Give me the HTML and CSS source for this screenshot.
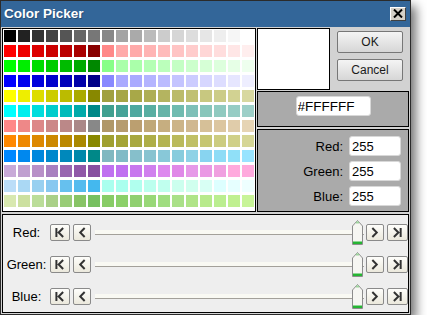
FILE: index.html
```html
<!DOCTYPE html>
<html lang="en">
<head>
    <meta charset="UTF-8">
    <title>Color Picker</title>
    <link rel="stylesheet" href="styles.css">
</head>
<body>

    <div class="window">
        <div class="titlebar">
            <span class="title">Color Picker</span>
            <button class="close-btn" title="Close">
                <svg width="10" height="9" viewBox="0 0 10 9"><path d="M1 0.5 L9 8.5 M9 0.5 L1 8.5" stroke="#000" stroke-width="2"/></svg>
            </button>
        </div>

        <div class="content">
            <div class="top">
                <div class="swatches" id="swatches"></div>

                <div class="side">
                    <div class="side-top">
                        <div class="preview" id="preview"></div>
                        <div class="actions">
                            <button class="dlg-btn">OK</button>
                            <button class="dlg-btn">Cancel</button>
                        </div>
                    </div>

                    <div class="hex-panel">
                        <input type="text" class="field hex-field" id="hex" value="#FFFFFF">
                    </div>

                    <div class="rgb-panel">
                        <div class="rgb-row">
                            <label for="red">Red:</label>
                            <input type="text" class="field" id="red" value="255">
                        </div>
                        <div class="rgb-row">
                            <label for="green">Green:</label>
                            <input type="text" class="field" id="green" value="255">
                        </div>
                        <div class="rgb-row">
                            <label for="blue">Blue:</label>
                            <input type="text" class="field" id="blue" value="255">
                        </div>
                    </div>
                </div>
            </div>

            <div class="sliders">
                <div class="slider-row">
                    <span class="slider-label">Red:</span>
                    <button class="step-btn wide"><svg width="20" height="15" viewBox="0 0 20 15"><path d="M6 2.5 V12.5 M13.5 2.5 L8.5 7.5 L13.5 12.5" /></svg></button>
                    <button class="step-btn"><svg width="18" height="15" viewBox="0 0 18 15"><path d="M12 2.5 L7 7.5 L12 12.5" /></svg></button>
                    <div class="track"><span class="thumb"><svg width="13" height="25" viewBox="0 0 13 25"><path class="thumb-body" d="M1.5 24.5 V6 L6.5 0.5 L11.5 6 V24.5 Z"/><rect class="thumb-tip" x="5" y="1.5" width="3" height="2"/><rect class="thumb-foot" x="2" y="21.5" width="9" height="2.5"/></svg></span></div>
                    <button class="step-btn"><svg width="18" height="15" viewBox="0 0 18 15"><path d="M6 2.5 L11 7.5 L6 12.5" /></svg></button>
                    <button class="step-btn wide"><svg width="21" height="15" viewBox="0 0 21 15"><path d="M6.5 2.5 L11.5 7.5 L6.5 12.5 M14 2.5 V12.5" /></svg></button>
                </div>
                <div class="slider-row">
                    <span class="slider-label">Green:</span>
                    <button class="step-btn wide"><svg width="20" height="15" viewBox="0 0 20 15"><path d="M6 2.5 V12.5 M13.5 2.5 L8.5 7.5 L13.5 12.5" /></svg></button>
                    <button class="step-btn"><svg width="18" height="15" viewBox="0 0 18 15"><path d="M12 2.5 L7 7.5 L12 12.5" /></svg></button>
                    <div class="track"><span class="thumb"><svg width="13" height="25" viewBox="0 0 13 25"><path class="thumb-body" d="M1.5 24.5 V6 L6.5 0.5 L11.5 6 V24.5 Z"/><rect class="thumb-tip" x="5" y="1.5" width="3" height="2"/><rect class="thumb-foot" x="2" y="21.5" width="9" height="2.5"/></svg></span></div>
                    <button class="step-btn"><svg width="18" height="15" viewBox="0 0 18 15"><path d="M6 2.5 L11 7.5 L6 12.5" /></svg></button>
                    <button class="step-btn wide"><svg width="21" height="15" viewBox="0 0 21 15"><path d="M6.5 2.5 L11.5 7.5 L6.5 12.5 M14 2.5 V12.5" /></svg></button>
                </div>
                <div class="slider-row">
                    <span class="slider-label">Blue:</span>
                    <button class="step-btn wide"><svg width="20" height="15" viewBox="0 0 20 15"><path d="M6 2.5 V12.5 M13.5 2.5 L8.5 7.5 L13.5 12.5" /></svg></button>
                    <button class="step-btn"><svg width="18" height="15" viewBox="0 0 18 15"><path d="M12 2.5 L7 7.5 L12 12.5" /></svg></button>
                    <div class="track"><span class="thumb"><svg width="13" height="25" viewBox="0 0 13 25"><path class="thumb-body" d="M1.5 24.5 V6 L6.5 0.5 L11.5 6 V24.5 Z"/><rect class="thumb-tip" x="5" y="1.5" width="3" height="2"/><rect class="thumb-foot" x="2" y="21.5" width="9" height="2.5"/></svg></span></div>
                    <button class="step-btn"><svg width="18" height="15" viewBox="0 0 18 15"><path d="M6 2.5 L11 7.5 L6 12.5" /></svg></button>
                    <button class="step-btn wide"><svg width="21" height="15" viewBox="0 0 21 15"><path d="M6.5 2.5 L11.5 7.5 L6.5 12.5 M14 2.5 V12.5" /></svg></button>
                </div>
            </div>
        </div>
    </div>

    <script>
        // 12 rows x 18 columns
        const paleta = [
            "000000 222222 333333 444444 555555 666666 777777 888888 a4a4a4 aaaaaa bbbbbb cccccc d6d6d6 dddddd e6e6e6 eeeeee f6f6f6 ffffff",
            "ff0000 ee0000 dd0000 cc0000 bb0000 aa0000 880000 ff8888 ffaaaa ffaaaa ffb4b4 ffbbbb ffc4c4 ffcccc ffd6d6 ffdddd ffe6e6 ffeeee",
            "00ff00 00ee00 00dd00 00cc00 00bb00 00aa00 008800 88ff88 aaffaa aaffaa b4ffb4 bbffbb c4ffc4 ccffcc d6ffd6 ddffdd e6ffe6 eeffee",
            "0000ff 0000ee 0000dd 0000cc 0000bb 0000aa 000088 8888ff aaaaff aaaaff b4b4ff bbbbff c4c4ff ccccff d6d6ff ddddff e6e6ff eeeeff",
            "ffff00 eeee00 dddd00 cccc00 bbbb00 aaaa00 888800 a0a040 a6a645 a8a848 aeae55 b4b460 bbbb6a c0c072 c8c880 cccc88 d2d292 d8d8a0",
            "00ffff 00eeee 00dddd 00cccc 00bbbb 00aaaa 008888 40a090 46a398 4ea8a0 58aea2 66b4a8 70bbb0 7ec0b8 88c6bb 90cac0 96ccc4 9dcfc8",
            "ff8888 ee8888 dd8888 cc8888 bb8888 aa8888 888888 b09868 b69c6e bb9f70 c0a878 c6ae80 ccb488 d0b890 d6c098 dcc6a0 e0ccaa e6d4b4",
            "ff8800 ee8800 dd8800 cc8800 bb8800 aa8800 888800 a0a030 a4a436 a8a840 aeae48 b4b452 baba5c c0c066 c6c672 cccc80 d0d088 d6d696",
            "0088ff 0088ee 0088dd 0088cc 0088bb 0088aa 008888 80b8c0 80bbc6 86bfcb 88c3d0 88c8d8 88ccdd 8ed2e6 88d4f0 8edcf6 90e0f8 99e4ff",
            "c8aad8 c0a0d0 b890c8 a880c0 9966b0 9058a8 8850a0 c070f0 c070f0 c877ee d080ee dd88ee e088e8 e699e8 ea99e4 f0a0e0 ffaadd ffaadd",
            "bbddf8 aad8f4 99d0f0 88c8f0 66c0ee 55bbee 44b8ee aaffee aaffee b0ffee bbffee c0ffee ccffee d0ffee d8fff4 ddffff e6ffff eeffff",
            "d8e8b0 cce0a0 bbdd99 aad088 99cc77 88c466 77c060 88cc66 8cd06a 90d070 99d878 a0dd80 aae088 b0e488 b8ea8c bbee90 c0f090 c8f498"
        ];

        const swatches = document.getElementById('swatches');
        paleta.forEach(linha => {
            linha.split(' ').forEach(cor => {
                let cell = document.createElement('div');
                cell.className = 'swatch';
                cell.style.backgroundColor = '#' + cor;
                cell.title = '#' + cor.toUpperCase();
                swatches.appendChild(cell);
            });
        });
    </script>

</body>
</html>
```

FILE: styles.css
```css
body {
    margin: 0;
    padding: 0;
    background-color: #ffffff;
    font-family: "Liberation Sans", Arial, sans-serif;
}
.window {
    box-sizing: border-box;
    width: 411px;
    height: 315px;
    border: 1px solid #2b2b2b;
    background-color: #d2d2d2;
    box-shadow: 5px 6px 10px rgba(0, 0, 0, 0.55);
}
.titlebar {
    height: 26px;
    background-color: #336699;
    display: flex;
    align-items: center;
    justify-content: space-between;
    padding: 0 4px 0 3px;
}
.title {
    color: #ffffff;
    font-weight: bold;
    font-size: 13.5px;
    text-shadow: 1px 1px 0 rgba(0, 0, 0, 0.25);
    margin-top: -2px;
}
.close-btn {
    box-sizing: border-box;
    width: 16px;
    height: 14px;
    padding: 0;
    margin-top: -1px;
    display: flex;
    align-items: center;
    justify-content: center;
    background-color: #d4d0c8;
    border: 1px solid;
    border-color: #ffffff #404040 #404040 #ffffff;
}
.content {
    padding: 1px;
}
.top {
    display: flex;
    align-items: flex-start;
    height: 185px;
}
.swatches {
    box-sizing: border-box;
    width: 254px;
    height: 184px;
    border: 1px solid #000;
    background-color: #ffffff;
    padding: 1px;
    display: grid;
    grid-template-columns: repeat(18, 12px);
    grid-auto-rows: 12px;
    column-gap: 2px;
    row-gap: 3px;
}
.swatch {
    cursor: pointer;
}
.side {
    width: 152px;
    margin-left: 1px;
}
.side-top {
    display: flex;
    height: 62px;
}
.preview {
    box-sizing: border-box;
    width: 73px;
    height: 62px;
    border: 1px solid #000;
    background-color: #ffffff;
}
.actions {
    margin-left: 7px;
    padding-top: 3px;
    display: flex;
    flex-direction: column;
    gap: 6px;
}
.dlg-btn {
    box-sizing: border-box;
    width: 66px;
    height: 22px;
    padding: 0;
    font-family: "Liberation Sans", Arial, sans-serif;
    font-size: 12px;
    color: #1a1a1a;
    border: 1px solid #777;
    border-radius: 2px;
    background: linear-gradient(#f4f4f4, #d6d6d6);
}
.hex-panel {
    box-sizing: border-box;
    height: 36px;
    margin-top: 1px;
    border: 1px solid #000;
    background-color: #aaaaaa;
    display: flex;
    justify-content: center;
    padding-top: 4px;
}
.field {
    box-sizing: border-box;
    width: 52px;
    height: 20px;
    padding: 0 0 0 2px;
    border: 1px solid #d8d8d8;
    border-radius: 3px;
    background-color: #ffffff;
    font-family: "Liberation Sans", Arial, sans-serif;
    font-size: 13px;
    color: #000;
}
.hex-field {
    width: 75px;
    padding-left: 1px;
    font-size: 13.5px;
}
.rgb-panel {
    box-sizing: border-box;
    height: 83px;
    margin-top: 2px;
    border: 1px solid #000;
    background-color: #aaaaaa;
    padding: 6px 7px 0 0;
    display: flex;
    flex-direction: column;
    gap: 5px;
}
.rgb-row {
    display: flex;
    justify-content: flex-end;
    align-items: center;
    gap: 6px;
}
.rgb-row label {
    font-size: 13px;
    color: #000;
}
.sliders {
    box-sizing: border-box;
    height: 99px;
    margin-top: 1px;
    border: 1px solid #000;
    background-color: #eeeeee;
    padding-top: 1px;
}
.slider-row {
    display: flex;
    align-items: center;
    height: 32px;
}
.slider-label {
    width: 47px;
    text-align: center;
    font-size: 13px;
    color: #000;
}
.step-btn {
    box-sizing: border-box;
    width: 18px;
    height: 17px;
    padding: 0;
    margin-right: 3px;
    display: flex;
    align-items: center;
    justify-content: center;
    border: 1px solid #8a8a8a;
    border-radius: 2px;
    background: linear-gradient(#fefefb, #ebe8dc);
}
.step-btn.wide {
    width: 20px;
}
.step-btn:last-child {
    width: 21px;
    margin-right: 0;
}
.step-btn svg path {
    fill: none;
    stroke: #333;
    stroke-width: 2.2;
}
.track {
    position: relative;
    flex: 1;
    height: 4px;
    margin: 0 2px 0 1px;
    background-color: #f9f9f3;
    border-bottom: 1px solid #a3a09a;
}
.thumb {
    position: absolute;
    right: 0;
    top: -10px;
    display: block;
    width: 13px;
    height: 25px;
}
.thumb svg {
    display: block;
}
.thumb-body {
    fill: #f6f6f2;
    stroke: #8c8c8c;
    stroke-width: 1;
}
.thumb-tip {
    fill: #9ed49e;
}
.thumb-foot {
    fill: #25b533;
}
```
